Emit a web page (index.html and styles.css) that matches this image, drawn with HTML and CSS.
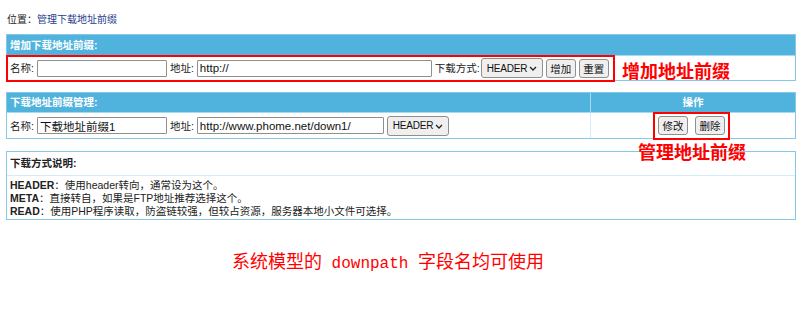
FILE: index.html
```html
<!DOCTYPE html>
<html lang="zh-CN">
<head>
<meta charset="utf-8">
<title>管理下载地址前缀</title>
<link rel="stylesheet" href="styles.css">
</head>
<body>
<div class="page">
  <div class="crumb">位置：<a class="crumb-link">管理下载地址前缀</a></div>

  <div class="box box-add">
    <div class="hd">增加下载地址前缀:</div>
    <div class="row">
      <span class="lbl">名称:</span>
      <input class="in in-name" type="text" value="">
      <span class="lbl">地址:</span>
      <input class="in in-url1" type="text" value="http://">
      <span class="lbl lbl-mode">下载方式:</span>
      <span class="selwrap">
        <select class="sel"><option>HEADER</option><option>META</option><option>READ</option></select>
        <svg class="chev" width="8" height="5" viewBox="0 0 8 5"><path d="M1 1l3 3 3-3" fill="none" stroke="#222" stroke-width="1.3"/></svg>
      </span>
      <button class="btn">增加</button>
      <button class="btn">重置</button>
    </div>
    <div class="mark mark-add"></div>
    <div class="note note-add">增加地址前缀</div>
  </div>

  <div class="box box-list">
    <div class="grid">
      <div class="hd">下载地址前缀管理:</div>
      <div class="hd hd-op">操作</div>
      <div class="row">
        <span class="lbl">名称:</span>
        <input class="in in-name" type="text" value="下载地址前缀1">
        <span class="lbl">地址:</span>
        <input class="in in-url2" type="text" value="http://www.phome.net/down1/">
        <span class="selwrap">
          <select class="sel"><option>HEADER</option><option>META</option><option>READ</option></select>
          <svg class="chev" width="8" height="5" viewBox="0 0 8 5"><path d="M1 1l3 3 3-3" fill="none" stroke="#222" stroke-width="1.3"/></svg>
        </span>
      </div>
      <div class="row row-op">
        <button class="btn">修改</button>
        <button class="btn">删除</button>
      </div>
    </div>
    <div class="mark mark-op"></div>
    <div class="note note-op">管理地址前缀</div>
  </div>

  <div class="box box-help">
    <div class="help-hd">下载方式说明:</div>
    <div class="help-bd">
      <div><b>HEADER</b>：使用header转向，通常设为这个。</div>
      <div><b>META</b>：直接转自，如果是FTP地址推荐选择这个。</div>
      <div><b>READ</b>：使用PHP程序读取，防盗链较强，但较占资源，服务器本地小文件可选择。</div>
    </div>
  </div>

  <div class="footnote">系统模型的<span class="mono"> downpath </span>字段名均可使用</div>
</div>
</body>
</html>
```
FILE: styles.css
```css
* { box-sizing: border-box; }
body {
  margin: 0;
  font: 10.5px/14px "Liberation Sans", "Noto Sans CJK SC", sans-serif;
  color: #222;
  background: #fff;
}
.page {
  width: 800px;
  padding: 13px 4px 0 6px;
}
.crumb {
  height: 14px;
  line-height: 14px;
  padding-left: 1px;
  margin-bottom: 7px;
  font-size: 10px;
}
.crumb-link { color: #1e3c8c; }

.box {
  position: relative;
  border: 1px solid #86c8e8;
  background: #fff;
}
.box-list { margin-top: 11px; z-index: 2; }
.box-help { margin-top: 12px; z-index: 1; }

.hd {
  height: 21px;
  line-height: 20px;
  padding-left: 3px;
  background: #50b3de;
  color: #fff;
  font-weight: bold;
  border-bottom: 1px solid #a6daf1;
}
.row {
  height: 24px;
  display: flex;
  align-items: center;
  gap: 3px;
  padding-left: 3px;
}
.lbl-mode { margin-right: -2px; }
.in {
  height: 17px;
  border: 1px solid #8f8f8f;
  border-radius: 1px;
  padding: 0 2px;
  font: 11.5px "Liberation Sans", "Noto Sans CJK SC", sans-serif;
  color: #111;
  background: #fff;
}
.in-name { width: 130px; }
.in-url1 { width: 235px; }
.in-url2 { width: 187px; }
.selwrap {
  position: relative;
  display: inline-flex;
}
.sel {
  appearance: none;
  -webkit-appearance: none;
  width: 62px;
  height: 20px;
  font: 10px "Liberation Sans", sans-serif;
  letter-spacing: -0.2px;
  color: #111;
  border: 1px solid #8f8f8f;
  border-radius: 3px;
  background: #efefef;
  padding: 0 0 0 5px;
}
.chev {
  position: absolute;
  right: 6px;
  top: 8px;
  pointer-events: none;
}
.btn {
  height: 19px;
  width: 30px;
  padding: 0;
  font: 10.5px "Noto Sans CJK SC", sans-serif;
  color: #111;
  background: #efefef;
  border: 1px solid #8f8f8f;
  border-radius: 3px;
}

.grid {
  display: grid;
  grid-template-columns: 583px 1fr;
}
.hd-op {
  text-align: center;
  padding-left: 0;
  border-left: 1px solid #a6daf1;
}
.box-list .hd { height: 20px; line-height: 19px; }
.box-list .row { height: 25px; }
.row-op {
  justify-content: center;
  gap: 7px;
  padding-left: 0;
  padding-right: 3px;
  border-left: 1px solid #d3ecf8;
}

.mark {
  position: absolute;
  border: 2px solid #f00;
}
.mark-add { left: -1px; top: 20px; width: 609px; height: 27px; }
.mark-op { left: 646px; top: 19px; width: 77px; height: 28px; }

.note {
  position: absolute;
  color: #f00;
  font: bold 18px/20px "Noto Sans CJK SC", sans-serif;
  white-space: nowrap;
}
.note-add { left: 615px; top: 25px; }
.note-op { left: 631px; top: 48px; z-index: 3; }

.help-hd {
  height: 24px;
  line-height: 23px;
  padding-left: 3px;
  font-weight: bold;
  border-bottom: 1px solid #d3ecf8;
}
.help-bd {
  padding: 3px 3px 1px;
  line-height: 13px;
}
.help-bd div { height: 13px; white-space: nowrap; }

.footnote {
  margin-top: 30px;
  padding-left: 226px;
  color: #f00;
  font: 18px/20px "Noto Sans CJK SC", sans-serif;
  white-space: nowrap;
}
.mono { font: 16px "Liberation Mono", monospace; }
```
